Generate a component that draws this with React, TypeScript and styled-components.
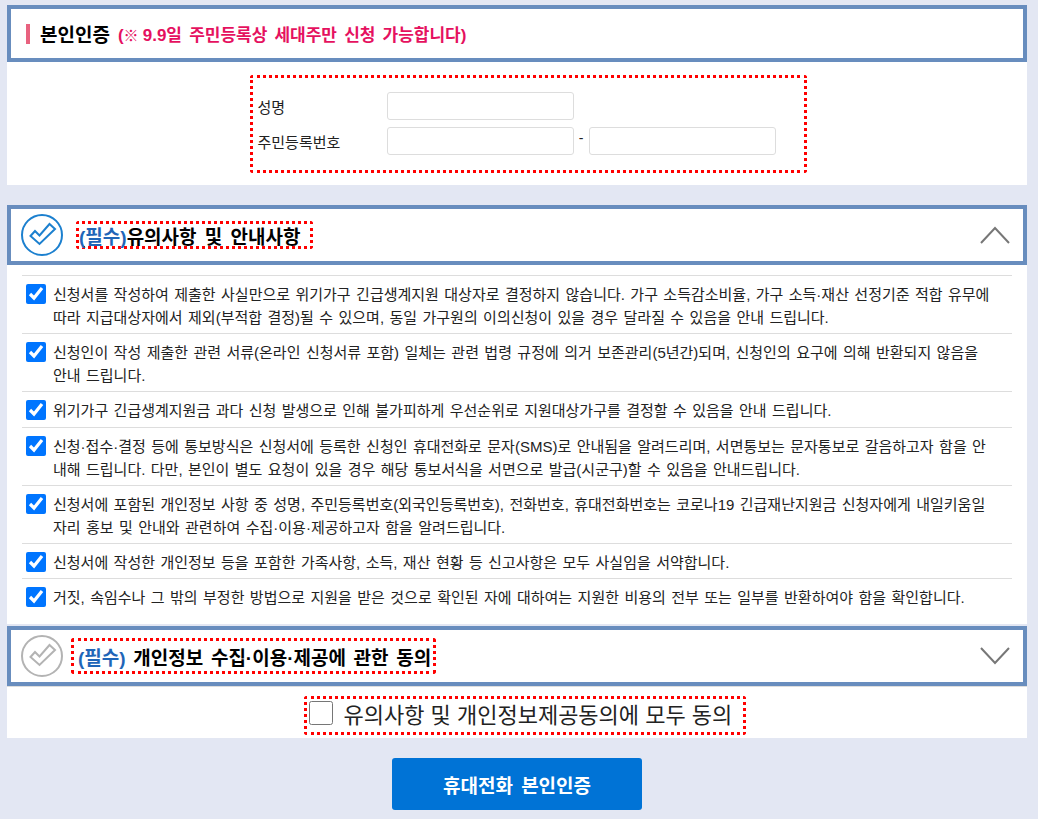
import React from 'react';
import styled, { createGlobalStyle } from 'styled-components';

const GlobalStyle = createGlobalStyle`
  html, body {
    margin: 0;
    padding: 0;
    background: #e3e7f3;
    font-family: "Liberation Sans", "Noto Sans CJK KR", sans-serif;
    color: #222;
  }
  * { box-sizing: border-box; }
`;

const Page = styled.div`
  width: 1038px;
  height: 819px;
  padding: 5px 11px 0 7px;
  overflow: hidden;
`;

const HeadBar = styled.div<{ $h: number }>`
  height: ${p => p.$h}px;
  border: 4px solid #688dbe;
  background: #fff;
  display: flex;
  align-items: center;
`;

const AuthHead = styled(HeadBar)`
  padding-left: 15px;
`;

const PinkMark = styled.span`
  width: 4px;
  height: 20px;
  background: #e8627f;
  margin-right: 10px;
`;

const AuthTitle = styled.strong`
  font-size: 19px;
  color: #000;
  margin-right: 8px;
`;

const AuthNote = styled.strong`
  font-size: 17px;
  word-spacing: 2.4px;
  color: #e5115f;
`;

const NoteMark = styled.span`
  font-size: 15px;
  letter-spacing: -3px;
`;

const AuthBody = styled.div`
  background: #fff;
  height: 123px;
  padding: 13px 0 0 22px;
  display: flex;
  justify-content: center;
  margin-bottom: 20px;
`;

const RedBox = styled.div`
  border: 3px dotted #f00;
  border-radius: 3px;
`;

const AuthBox = styled(RedBox)`
  width: 557px;
  height: 98px;
  padding: 14px 0 0 5px;
  display: flex;
  flex-direction: column;
  gap: 7px;
`;

const FieldRow = styled.div`
  display: flex;
  align-items: center;
  height: 28px;
`;

const FieldLabel = styled.label`
  width: 129px;
  font-size: 15px;
  color: #222;
`;

const TextField = styled.input`
  width: 187px;
  height: 28px;
  border: 1px solid #ddd;
  border-radius: 3px;
  background: #fff;
`;

const Dash = styled.span`
  width: 15px;
  text-align: center;
  font-size: 14px;
  margin-top: -6px;
`;

const SectionHead = styled(HeadBar)`
  padding: 0 13px 0 9px;
  justify-content: flex-start;
`;

const HeadTitle = styled.strong<{ $ws: number }>`
  font-size: 19px;
  word-spacing: ${p => p.$ws}px;
  color: #000;
  white-space: pre;
`;

const Required = styled.span`
  color: #1f66b8;
`;

const TitleBox = styled(RedBox)<{ $w: number; $h: number; $gap: number; $pad: number }>`
  width: ${p => p.$w}px;
  height: ${p => p.$h}px;
  margin-left: ${p => p.$gap}px;
  padding-left: ${p => p.$pad}px;
  display: flex;
  align-items: center;
`;

const Chevron = styled.svg`
  margin-left: auto;
`;

const NoticeWrap = styled.div`
  background: #fff;
  padding: 10px 15px 0;
  height: 359px;
  margin-bottom: 2px;
`;

const NoticeRow = styled.div`
  border-top: 1px solid #ddd;
  display: flex;
  align-items: flex-start;
  padding: 7px 0 0 4px;
`;

const NoticeCheck = styled.input`
  width: 20px;
  height: 20px;
  margin: 1px 7px 0 0;
  flex: none;
  accent-color: #0075ff;
`;

const NoticeText = styled.p<{ $h: number }>`
  margin: 0;
  width: 938px;
  font-size: 15px;
  line-height: 23px;
  word-spacing: 1.25px;
  word-break: break-all;
  color: #222;
  height: ${p => p.$h}px;
`;

const AgreeWrap = styled.div`
  background: #fff;
  border-top: 1px solid #ddd;
  height: 52px;
  padding: 9px 0 0 15px;
  display: flex;
  justify-content: center;
`;

const AgreeBox = styled(RedBox)`
  width: 442px;
  height: 39px;
  display: flex;
  align-items: center;
  padding: 0 0 5px 2px;
`;

const AgreeCheck = styled.input`
  width: 24px;
  height: 24px;
  margin: 0 11px 0 0;
`;

const AgreeLabel = styled.label`
  font-size: 22px;
  color: #222;
  white-space: pre;
`;

const ButtonRow = styled.div`
  display: flex;
  justify-content: center;
  margin-top: 20px;
`;

const SubmitButton = styled.button`
  width: 250px;
  height: 52px;
  background: #0073d6;
  border: none;
  border-radius: 3px;
  color: #fff;
  font-family: inherit;
  font-size: 19px;
  word-spacing: 3px;
  font-weight: bold;
`;

const CheckCircle = ({ color }: { color: string }) => (
  <svg width="44" height="44" viewBox="0 0 44 44" fill="none">
    <circle cx="22" cy="22" r="20" stroke={color} strokeWidth="2" />
    <path
      d="M10.5 23 L15 18 L19.5 22.5 L29.5 11 L35 16 L19.5 31 Z"
      stroke={color}
      strokeWidth="2"
      strokeLinejoin="miter"
    />
  </svg>
);

const notices: { text: string; h: number }[] = [
  {
    text: '신청서를 작성하여 제출한 사실만으로 위기가구 긴급생계지원 대상자로 결정하지 않습니다. 가구 소득감소비율, 가구 소득·재산 선정기준 적합 유무에 따라 지급대상자에서 제외(부적합 결정)될 수 있으며, 동일 가구원의 이의신청이 있을 경우 달라질 수 있음을 안내 드립니다.',
    h: 50,
  },
  {
    text: '신청인이 작성 제출한 관련 서류(온라인 신청서류 포함) 일체는 관련 법령 규정에 의거 보존관리(5년간)되며, 신청인의 요구에 의해 반환되지 않음을 안내 드립니다.',
    h: 50,
  },
  {
    text: '위기가구 긴급생계지원금 과다 신청 발생으로 인해 불가피하게 우선순위로 지원대상가구를 결정할 수 있음을 안내 드립니다.',
    h: 28,
  },
  {
    text: '신청·접수·결정 등에 통보방식은 신청서에 등록한 신청인 휴대전화로 문자(SMS)로 안내됨을 알려드리며, 서면통보는 문자통보로 갈음하고자 함을 안내해 드립니다. 다만, 본인이 별도 요청이 있을 경우 해당 통보서식을 서면으로 발급(시군구)할 수 있음을 안내드립니다.',
    h: 50,
  },
  {
    text: '신청서에 포함된 개인정보 사항 중 성명, 주민등록번호(외국인등록번호), 전화번호, 휴대전화번호는 코로나19 긴급재난지원금 신청자에게 내일키움일자리 홍보 및 안내와 관련하여 수집·이용·제공하고자 함을 알려드립니다.',
    h: 50,
  },
  {
    text: '신청서에 작성한 개인정보 등을 포함한 가족사항, 소득, 재산 현황 등 신고사항은 모두 사실임을 서약합니다.',
    h: 27,
  },
  {
    text: '거짓, 속임수나 그 밖의 부정한 방법으로 지원을 받은 것으로 확인된 자에 대하여는 지원한 비용의 전부 또는 일부를 반환하여야 함을 확인합니다.',
    h: 27,
  },
];

const App: React.FC = () => {
  return (
    <>
      <GlobalStyle />
      <Page>
        <AuthHead $h={57}>
          <PinkMark />
          <AuthTitle>본인인증</AuthTitle>
          <AuthNote>
            (<NoteMark>※</NoteMark> 9.9일 주민등록상 세대주만 신청 가능합니다)
          </AuthNote>
        </AuthHead>
        <AuthBody>
          <AuthBox>
            <FieldRow>
              <FieldLabel>성명</FieldLabel>
              <TextField type="text" />
            </FieldRow>
            <FieldRow>
              <FieldLabel>주민등록번호</FieldLabel>
              <TextField type="text" />
              <Dash>-</Dash>
              <TextField type="text" />
            </FieldRow>
          </AuthBox>
        </AuthBody>

        <SectionHead $h={60}>
          <CheckCircle color="#1c80cf" />
          <TitleBox $w={237} $h={28} $gap={12} $pad={0}>
            <HeadTitle $ws={3}>
              <Required>(필수)</Required>유의사항 및 안내사항
            </HeadTitle>
          </TitleBox>
          <Chevron width="30" height="18" viewBox="0 0 30 18" fill="none">
            <path d="M1 17 L15 2 L29 17" stroke="#777" strokeWidth="2" />
          </Chevron>
        </SectionHead>
        <NoticeWrap>
          {notices.map((n, i) => (
            <NoticeRow key={i}>
              <NoticeCheck type="checkbox" checked readOnly />
              <NoticeText $h={n.h}>{n.text}</NoticeText>
            </NoticeRow>
          ))}
        </NoticeWrap>

        <SectionHead $h={60}>
          <CheckCircle color="#b3b3b3" />
          <TitleBox $w={365} $h={36} $gap={7} $pad={4}>
            <HeadTitle $ws={2.4}>
              <Required>(필수)</Required> 개인정보 수집·이용·제공에 관한 동의
            </HeadTitle>
          </TitleBox>
          <Chevron width="30" height="18" viewBox="0 0 30 18" fill="none">
            <path d="M1 1 L15 16 L29 1" stroke="#777" strokeWidth="2" />
          </Chevron>
        </SectionHead>
        <AgreeWrap>
          <AgreeBox>
            <AgreeCheck type="checkbox" />
            <AgreeLabel>유의사항 및 개인정보제공동의에 모두 동의</AgreeLabel>
          </AgreeBox>
        </AgreeWrap>
        <ButtonRow>
          <SubmitButton>휴대전화 본인인증</SubmitButton>
        </ButtonRow>
      </Page>
    </>
  );
};

export default App;
